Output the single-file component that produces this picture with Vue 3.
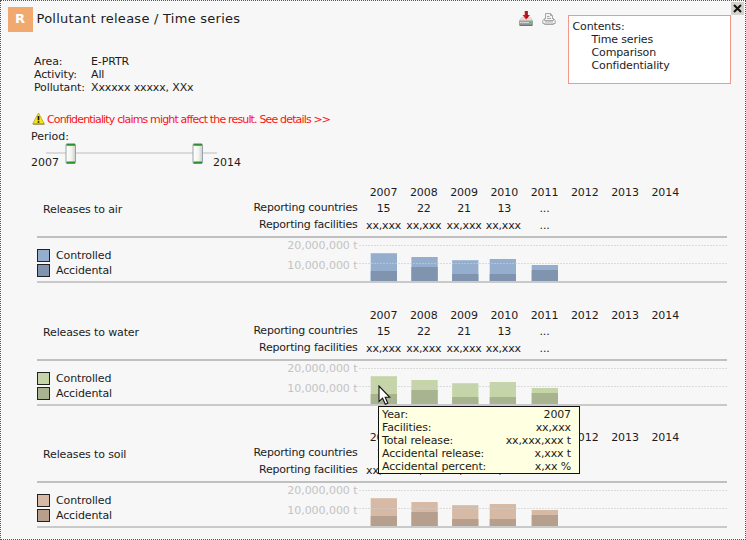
<script setup>
const contents = ['Time series', 'Comparison', 'Confidentiality']

const summary = [
  ['Area:', 'E-PRTR'],
  ['Activity:', 'All'],
  ['Pollutant:', 'Xxxxxx xxxxx, XXx'],
]

const years = [2007, 2008, 2009, 2010, 2011, 2012, 2013, 2014]
const countries = ['15', '22', '21', '13', '...']
const facilities = ['xx,xxx', 'xx,xxx', 'xx,xxx', 'xx,xxx', '...']

// Plot coordinates: x from the left end of the grid lines, heights from the base line
const bars = [
  { x: 11.7, total: 27.8, accidental: 10 },
  { x: 52.4, total: 24, accidental: 14 },
  { x: 93.1, total: 20.8, accidental: 7 },
  { x: 130.7, total: 22, accidental: 7 },
  { x: 172.7, total: 16, accidental: 11 },
]

const sections = [
  { key: 'air', title: 'Releases to air', light: '#95aece', dark: '#8094b0' },
  { key: 'water', title: 'Releases to water', light: '#c6d5a8', dark: '#a8b390' },
  { key: 'soil', title: 'Releases to soil', light: '#d6baa6', dark: '#b69f8d' },
]

const details = [
  ['Year:', '2007'],
  ['Facilities:', 'xx,xxx'],
  ['Total release:', 'xx,xxx,xxx t'],
  ['Accidental release:', 'x,xxx t'],
  ['Accidental percent:', 'x,xx %'],
]
</script>

<template>
  <div class="page">
    <header class="top">
      <div class="badge">R</div>
      <h1 class="title">Pollutant release / Time series</h1>
      <div class="tools">
        <svg width="16" height="17" viewBox="0 0 16 17">
          <path d="M3.500 7.500h9l2.500 3v4.500H1v-4.500z" fill="#b4b4b4" />
          <path d="M3.500 7.500h9l1.800 2.800H1.700z" fill="#dcdcdc" />
          <path d="M1 11h14v4H1z" fill="#a2a2a2" />
          <path d="M1.500 15.300h13" stroke="#505050" />
          <path d="M2 12.500h9" stroke="#d2d2d2" />
          <path d="M11.500 12.500h2" stroke="#3cc43c" />
          <path d="M6.700 1h3v4h2.300L8.200 9.500 4.500 5h2.200z" fill="#d31818" />
          <path d="M9 1v7" stroke="#8a0c0c" />
        </svg>
        <svg width="14" height="14" viewBox="0 0 14 14" fill="#f4f4f4" stroke="#a6a6a6">
          <path d="M3.500 7V1.500h5l2 2V7" />
          <path d="M8.500 1.500v2h2M5 4.500h2.500M5 6.500h4" fill="none" />
          <path d="M2.500 6.500L.8 8.500v3h12.400v-3L11.500 6.500V8.500h-9z" />
          <path d="M2.500 11.500v1h9v-1M3 9.900h8" />
        </svg>
      </div>
      <nav class="contents">
        <div>Contents:</div>
        <div v-for="c in contents" :key="c" class="entry">{{ c }}</div>
      </nav>
      <button class="close" aria-label="Close">
        <svg width="9" height="9" viewBox="0 0 9 9">
          <path d="M1 1l7 7M8 1L1 8" stroke="#111" stroke-width="2" />
        </svg>
      </button>
    </header>

    <dl class="summary">
      <template v-for="[k, v] in summary" :key="k">
        <dt>{{ k }}</dt>
        <dd>{{ v }}</dd>
      </template>
    </dl>

    <div class="warning">
      <svg width="13" height="13" viewBox="0 0 13 13">
        <path d="M6.500 1L12.300 11.800H.7z" fill="#f7e41c" stroke="#b8aa32" stroke-width=".9" stroke-linejoin="round" />
        <path d="M1 12.200h11.500" stroke="#77702c" stroke-width=".8" />
        <path d="M6.500 4v4.200M6.500 9.200v1.600" stroke="#111" stroke-width="1.700" />
      </svg>
      <span>Confidentiality claims might affect the result. See details &gt;&gt;</span>
    </div>

    <div class="period">Period:</div>
    <div class="slider">
      <span class="bound">2007</span>
      <svg class="track" width="172" height="22" viewBox="0 0 172 22">
        <defs>
          <linearGradient id="thumb">
            <stop offset="0" stop-color="#fff" />
            <stop offset=".6" stop-color="#f2f2ee" />
            <stop offset="1" stop-color="#c9ccc9" />
          </linearGradient>
        </defs>
        <path d="M0 10h171" stroke="#d0d0d0" stroke-width="1.400" />
        <g v-for="x in [20.500, 147.500]" :key="x">
          <rect :x="x - 0.500" y="1" width="9.500" height="19.500" rx="1" fill="url(#thumb)" stroke="#96a5ac" />
          <path :d="`M${x} 1.700h8.500M${x} 19.600h8.500`" stroke="#2f8f2f" stroke-width="2" />
        </g>
      </svg>
      <span class="bound">2014</span>
    </div>

    <section v-for="s in sections" :key="s.key" class="release" :class="s.key">
      <div class="head">
        <div class="name">{{ s.title }}</div>
        <div class="rows">
          <div class="row years">
            <span class="label"></span>
            <span v-for="y in years" :key="y" class="cell">{{ y }}</span>
          </div>
          <div class="row">
            <span class="label">Reporting countries</span>
            <span v-for="(c, i) in countries" :key="i" class="cell">{{ c }}</span>
          </div>
          <div class="row facilities">
            <span class="label">Reporting facilities</span>
            <span v-for="(f, i) in facilities" :key="i" class="cell">{{ f }}</span>
          </div>
        </div>
      </div>
      <div class="chart">
        <div class="legend">
          <div class="item"><i class="swatch light"></i>Controlled</div>
          <div class="item"><i class="swatch dark"></i>Accidental</div>
        </div>
        <div class="axis">
          <span>20,000,000 t</span>
          <span>10,000,000 t</span>
        </div>
        <svg class="plot" width="368" height="43" viewBox="0 0 368 43">
          <g v-for="b in bars" :key="b.x">
            <rect :x="b.x" :y="43 - b.total" width="26.300" :height="b.total" :fill="s.light" />
            <rect :x="b.x" :y="43 - b.accidental" width="26.300" :height="b.accidental" :fill="s.dark" />
          </g>
          <path class="gridline" d="M0 7.500h368M0 25.500h368" />
        </svg>
      </div>
    </section>

    <div class="tooltip">
      <div v-for="[k, v] in details" :key="k" class="detail">
        <span>{{ k }}</span><span>{{ v }}</span>
      </div>
    </div>
    <svg class="cursor" width="13" height="21" viewBox="0 0 13 21">
      <path d="M1 1v15.500l3.600-3.300 2.700 6.100 2.500-1.100-2.600-5.900h4.600z" fill="#fff" stroke="#111" stroke-width="1.100" />
    </svg>
  </div>
</template>

<style>
body { background: #f7f7f7; }
</style>

<style scoped>
.page {
  position: relative;
  box-sizing: border-box;
  width: 746px;
  height: 540px;
  overflow: hidden;
  border: 1px dotted #555;
  background: #f7f7f7;
  color: #1c1c1c;
  font: 11px/13px Verdana, "DejaVu Sans", sans-serif;
  letter-spacing: -0.130px;
}
.top { display: flex; height: 54px; }
.top > * { flex: none; }
.badge {
  width: 25px;
  height: 25px;
  margin: 6px 4px 0 6.500px;
  background: #f2a970;
  color: #fff;
  font-weight: bold;
  font-size: 13px;
  line-height: 23px;
  text-align: center;
}
.title {
  width: 481px;
  margin: 10px 0 0;
  font-size: 13px;
  font-weight: normal;
  line-height: 16px;
  letter-spacing: 0.260px;
}
.tools { display: flex; gap: 8px; width: 50px; margin-top: 9px; }
.tools svg { flex: none; }
.tools svg:last-child { margin-top: 2px; }
.contents {
  box-sizing: border-box;
  width: 163px;
  height: 69px;
  margin-top: 14px;
  padding: 4px;
  border: 1px solid #f0998a;
  background: #fff;
}
.entry { padding-left: 19px; }
.close {
  display: flex;
  align-items: center;
  justify-content: center;
  width: 13px;
  height: 13px;
  margin: 1px 0 0;
  padding: 0;
  border: 0;
  background: #d6d3cc;
}
.summary {
  display: grid;
  grid-template-columns: 57px 200px;
  margin: 0 0 0 33px;
}
.summary dd { margin: 0; }
.warning {
  display: flex;
  gap: 2px;
  height: 18px;
  margin: 18px 0 0 31px;
  color: #f81414;
  letter-spacing: -0.840px;
}
.warning span { padding-top: 1px; white-space: nowrap; }
.period { margin-left: 30px; letter-spacing: 0; }
.slider { display: flex; height: 41px; margin-left: 30px; letter-spacing: 0; }
.bound { width: 27px; padding-top: 13px; }
.track { flex: none; margin: 0 -5px 0 -12px; }

.release { width: 690px; height: 123px; margin-left: 36px; }
.release.water { height: 122px; }
.head { display: flex; height: 52px; border-bottom: 2px solid #c0c0c0; }
.name { width: 154px; padding: 19px 0 0 6px; white-space: nowrap; }
.rows { width: 530px; }
.row { display: flex; height: 17px; white-space: nowrap; }
.years { height: 16px; padding-top: 1px; }
.label { flex: none; width: 160.500px; margin-right: 6px; text-align: right; letter-spacing: -0.210px; }
.cell { flex: none; width: 40.250px; padding-top: 1px; text-align: center; letter-spacing: 0; }
.facilities .cell { letter-spacing: -0.150px; }
.facilities .cell:nth-of-type(5) { margin: 0 1px 0 -1px; }
.chart { display: flex; height: 43px; border-bottom: 2px solid #c9c9c9; }
.legend { width: 160px; padding-top: 11px; }
.item { display: flex; gap: 6px; height: 15px; }
.swatch { box-sizing: border-box; width: 13px; height: 13px; border: 1px solid #222; }
.air .light { background: #95aece; }
.air .dark { background: #8094b0; }
.water .light { background: #c6d5a8; }
.water .dark { background: #a8b390; }
.soil .light { background: #d6baa6; }
.soil .dark { background: #b69f8d; }
.axis {
  display: flex;
  flex-direction: column;
  gap: 7px;
  width: 160.500px;
  padding-top: 1px;
  color: #c3c3c3;
  letter-spacing: -0.050px;
  text-align: right;
}
.plot { flex: none; margin-left: 1.500px; }
.gridline { stroke: #ccc; stroke-opacity: 0.650; stroke-dasharray: 2 1; }

.tooltip {
  position: absolute;
  left: 377px;
  top: 405px;
  box-sizing: border-box;
  width: 202px;
  height: 68px;
  padding: 1px 8px 0 3px;
  border: 1px solid #111;
  background: #ffffe1;
}
.detail { display: flex; justify-content: space-between; height: 12.900px; }
.cursor { position: absolute; left: 377px; top: 384px; }
</style>
